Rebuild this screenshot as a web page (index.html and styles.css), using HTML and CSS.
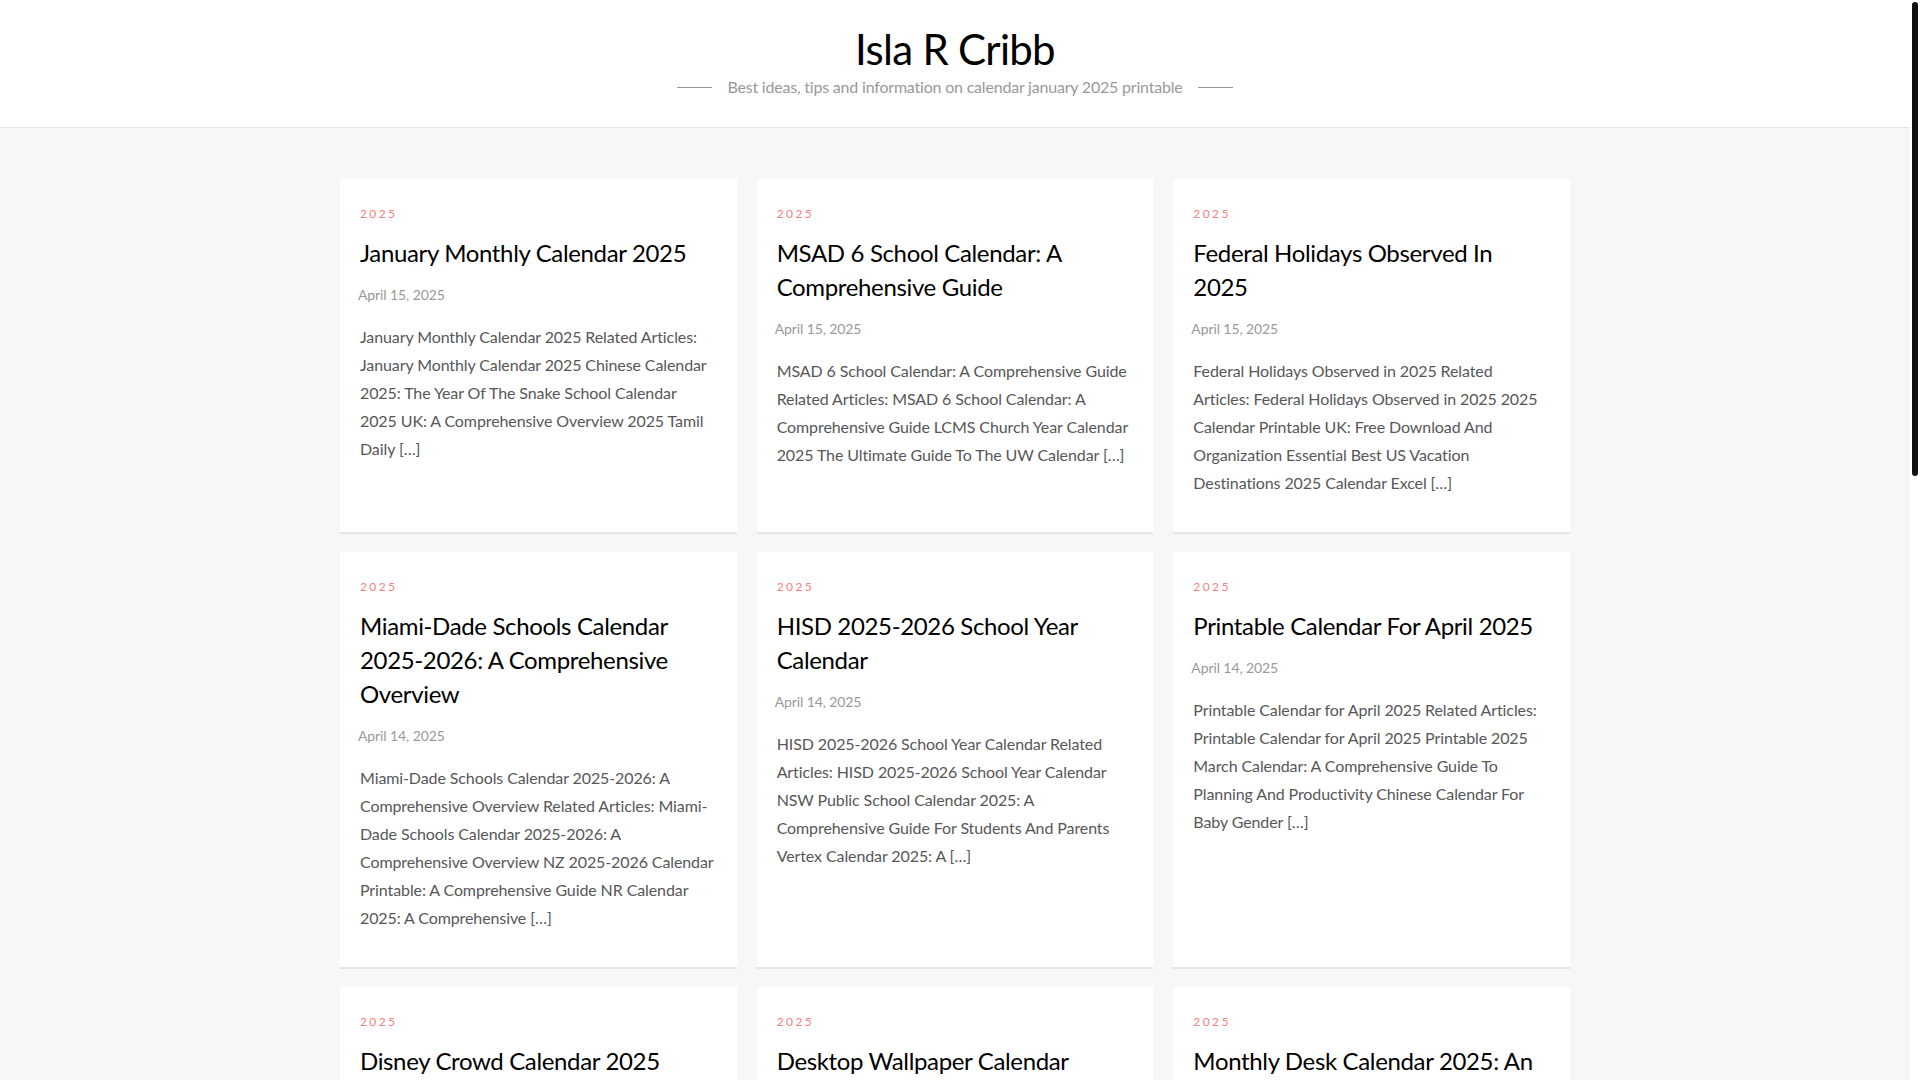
FILE: index.html
```html
<!DOCTYPE html>
<html lang="en">
<head>
<meta charset="utf-8">
<title>Isla R Cribb</title>
<link rel="stylesheet" href="styles.css">
</head>
<body>
<div class="page">
<header class="site-header">
  <h1 class="site-title">Isla R Cribb</h1>
  <p class="site-desc"><span class="rule"></span><span>Best ideas, tips and information on calendar january 2025 printable</span><span class="rule"></span></p>
</header>
<main class="posts">
  <article class="card">
    <div class="cat">2025</div>
    <h2 class="title">January Monthly Calendar 2025</h2>
    <div class="date">April 15, 2025</div>
    <p class="excerpt">January Monthly Calendar 2025 Related Articles: January Monthly Calendar 2025 Chinese Calendar 2025: The Year Of The Snake School Calendar 2025 UK: A Comprehensive Overview 2025 Tamil Daily […]</p>
  </article>
  <article class="card">
    <div class="cat">2025</div>
    <h2 class="title">MSAD 6 School Calendar: A Comprehensive Guide</h2>
    <div class="date">April 15, 2025</div>
    <p class="excerpt">MSAD 6 School Calendar: A Comprehensive Guide Related Articles: MSAD 6 School Calendar: A Comprehensive Guide LCMS Church Year Calendar 2025 The Ultimate Guide To The UW Calendar […]</p>
  </article>
  <article class="card">
    <div class="cat">2025</div>
    <h2 class="title">Federal Holidays Observed In 2025</h2>
    <div class="date">April 15, 2025</div>
    <p class="excerpt">Federal Holidays Observed in 2025 Related Articles: Federal Holidays Observed in 2025 2025 Calendar Printable UK: Free Download And Organization Essential Best US Vacation Destinations 2025 Calendar Excel […]</p>
  </article>
  <article class="card">
    <div class="cat">2025</div>
    <h2 class="title">Miami-Dade Schools Calendar 2025-2026: A Comprehensive Overview</h2>
    <div class="date">April 14, 2025</div>
    <p class="excerpt">Miami-Dade Schools Calendar 2025-2026: A Comprehensive Overview Related Articles: Miami-Dade Schools Calendar 2025-2026: A Comprehensive Overview NZ 2025-2026 Calendar Printable: A Comprehensive Guide NR Calendar 2025: A Comprehensive […]</p>
  </article>
  <article class="card">
    <div class="cat">2025</div>
    <h2 class="title">HISD 2025-2026 School Year Calendar</h2>
    <div class="date">April 14, 2025</div>
    <p class="excerpt">HISD 2025-2026 School Year Calendar Related Articles: HISD 2025-2026 School Year Calendar NSW Public School Calendar 2025: A Comprehensive Guide For Students And Parents Vertex Calendar 2025: A […]</p>
  </article>
  <article class="card">
    <div class="cat">2025</div>
    <h2 class="title">Printable Calendar For April 2025</h2>
    <div class="date">April 14, 2025</div>
    <p class="excerpt">Printable Calendar for April 2025 Related Articles: Printable Calendar for April 2025 Printable 2025 March Calendar: A Comprehensive Guide To Planning And Productivity Chinese Calendar For Baby Gender […]</p>
  </article>
  <article class="card">
    <div class="cat">2025</div>
    <h2 class="title">Disney Crowd Calendar 2025</h2>
    <div class="date">April 14, 2025</div>
    <p class="excerpt">Disney Crowd Calendar 2025 Related Articles: Disney Crowd Calendar 2025 Disney World Crowd Calendar 2025: A Comprehensive Guide To Planning Your Visit Walt Disney World Calendar 2025 […]</p>
  </article>
  <article class="card">
    <div class="cat">2025</div>
    <h2 class="title">Desktop Wallpaper Calendar 2025: A Stylish Way To Plan</h2>
    <div class="date">April 14, 2025</div>
    <p class="excerpt">Desktop Wallpaper Calendar 2025: A Stylish Way To Plan Related Articles: Desktop Wallpaper Calendar 2025 Free Printable Calendar 2025 With Holidays Monthly Planner 2025 […]</p>
  </article>
  <article class="card">
    <div class="cat">2025</div>
    <h2 class="title">Monthly Desk Calendar 2025: An Essential Organizational Tool</h2>
    <div class="date">April 14, 2025</div>
    <p class="excerpt">Monthly Desk Calendar 2025: An Essential Organizational Tool Related Articles: Monthly Desk Calendar 2025 Wall Calendar 2025: A Comprehensive Guide Weekly Planner Printable 2025 […]</p>
  </article>
</main>
</div>
<div class="scrollbar" aria-hidden="true"><div class="thumb"></div></div>
</body>
</html>
```

FILE: styles.css
```css
html,
body {
  margin: 0;
  height: 100%;
  overflow: hidden;
}
body {
  display: flex;
  background: #fff;
  font-family: "Lato", "Liberation Sans", sans-serif;
  color: #222;
}
.page {
  flex: 1;
  min-width: 0;
  height: 100vh;
  overflow: hidden;
  background: #f7f7f7;
}
.scrollbar {
  width: 10px;
  flex: none;
  background: #fff;
  padding: 2px;
  box-sizing: border-box;
}
.thumb {
  height: 474px;
  background: #111;
  border-radius: 3px;
}
.site-header {
  background: #fff;
  border-bottom: 1px solid #e6e6e6;
  height: 127px;
  display: flex;
  flex-direction: column;
  align-items: center;
}
.site-title {
  margin: 22px 0 0;
  font-size: 42px;
  line-height: 54px;
  font-weight: 400;
  color: #000;
  letter-spacing: -0.7px;
}
.site-desc {
  margin: 0;
  display: flex;
  align-items: center;
  gap: 15px;
  font-size: 16px;
  line-height: 22px;
  color: #999;
  font-weight: 400;
  letter-spacing: -0.2px;
}
.site-desc .rule {
  display: block;
  width: 35px;
  height: 1px;
  background: #999;
}
.posts {
  width: 1230px;
  margin: 51px auto 0;
  display: grid;
  grid-template-columns: repeat(3, 1fr);
  column-gap: 20px;
  row-gap: 18px;
}
.card {
  background: #fff;
  border-bottom: 2px solid #e5e5e5;
  padding: 25px 20px 35px;
}
.cat {
  font-size: 12px;
  line-height: 20px;
  letter-spacing: 2.4px;
  color: #f47f7f;
}
.title {
  margin: 12px 0 0;
  font-size: 24px;
  line-height: 34px;
  font-weight: 400;
  color: #000;
  letter-spacing: -0.35px;
}
.date {
  margin: 14px 0 0 -2px;
  font-size: 14px;
  line-height: 22px;
  color: #999;
  letter-spacing: -0.1px;
}
.excerpt {
  margin: 17px 0 0;
  font-size: 16px;
  line-height: 28px;
  color: #575757;
  font-weight: 400;
  letter-spacing: -0.1px;
}
```
